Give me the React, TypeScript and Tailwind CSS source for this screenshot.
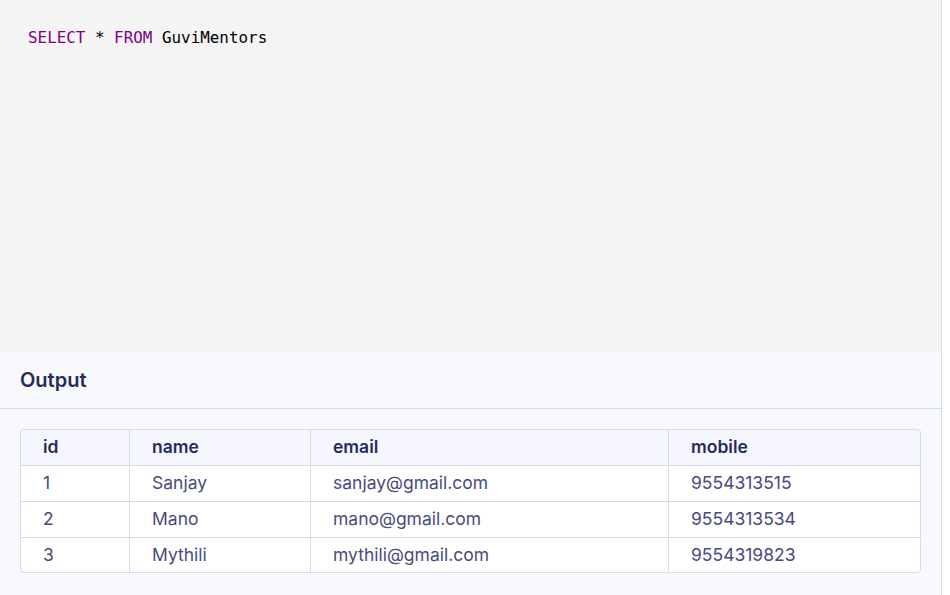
const rows = [
  { id: "1", name: "Sanjay", email: "sanjay@gmail.com", mobile: "9554313515" },
  { id: "2", name: "Mano", email: "mano@gmail.com", mobile: "9554313534" },
  { id: "3", name: "Mythili", email: "mythili@gmail.com", mobile: "9554319823" },
];

const cols = ["w-[109px]", "w-[181px]", "w-[358px]", "w-[253px]"];

export default function App() {
  return (
    <div className="w-[950px] h-[595px] bg-white overflow-hidden">
      <div className="w-[942px] h-full border-r border-[#d5dbe8] flex flex-col">
        <div className="h-[352px] bg-[#f4f4f4] px-7 pt-[28px] font-['DejaVu_Sans_Mono',monospace] text-[15.9px] leading-[20px] text-black">
          <span className="text-[#800080]">SELECT</span> * <span className="text-[#800080]">FROM</span> GuviMentors
        </div>
        <div className="flex-1 bg-[#f8f9fc] font-['Inter',sans-serif]">
          <div className="h-[57px] border-b border-[#d5dbe8] px-5 flex items-center text-[20px] font-semibold text-[#272b5c]">
            Output
          </div>
          <div className="px-5 pt-5">
            <table className="table-fixed border-separate border-spacing-0 w-[901px] text-[17.5px]">
              <thead>
                <tr className="bg-[#f6f7fe] text-[#272b5c] font-semibold">
                  {["id", "name", "email", "mobile"].map((h, i) => (
                    <th
                      key={h}
                      className={`${cols[i]} h-[36px] text-left pl-[22px] font-semibold border-t border-[#d5dbe8] ${i === 0 ? "border-l rounded-tl-[4px]" : "border-l"} ${i === 3 ? "border-r rounded-tr-[4px]" : ""}`}
                    >
                      {h}
                    </th>
                  ))}
                </tr>
              </thead>
              <tbody>
                {rows.map((r, ri) => (
                  <tr key={r.id} className="bg-white text-[#4a4b7c]">
                    {[r.id, r.name, r.email, r.mobile].map((v, i) => (
                      <td
                        key={i}
                        className={`h-[36px] pl-[22px] border-t border-l border-[#d5dbe8] ${i === 3 ? "border-r" : ""} ${ri === rows.length - 1 ? "border-b" : ""} ${ri === rows.length - 1 && i === 0 ? "rounded-bl-[4px]" : ""} ${ri === rows.length - 1 && i === 3 ? "rounded-br-[4px]" : ""}`}
                      >
                        {v}
                      </td>
                    ))}
                  </tr>
                ))}
              </tbody>
            </table>
          </div>
        </div>
      </div>
    </div>
  );
}
